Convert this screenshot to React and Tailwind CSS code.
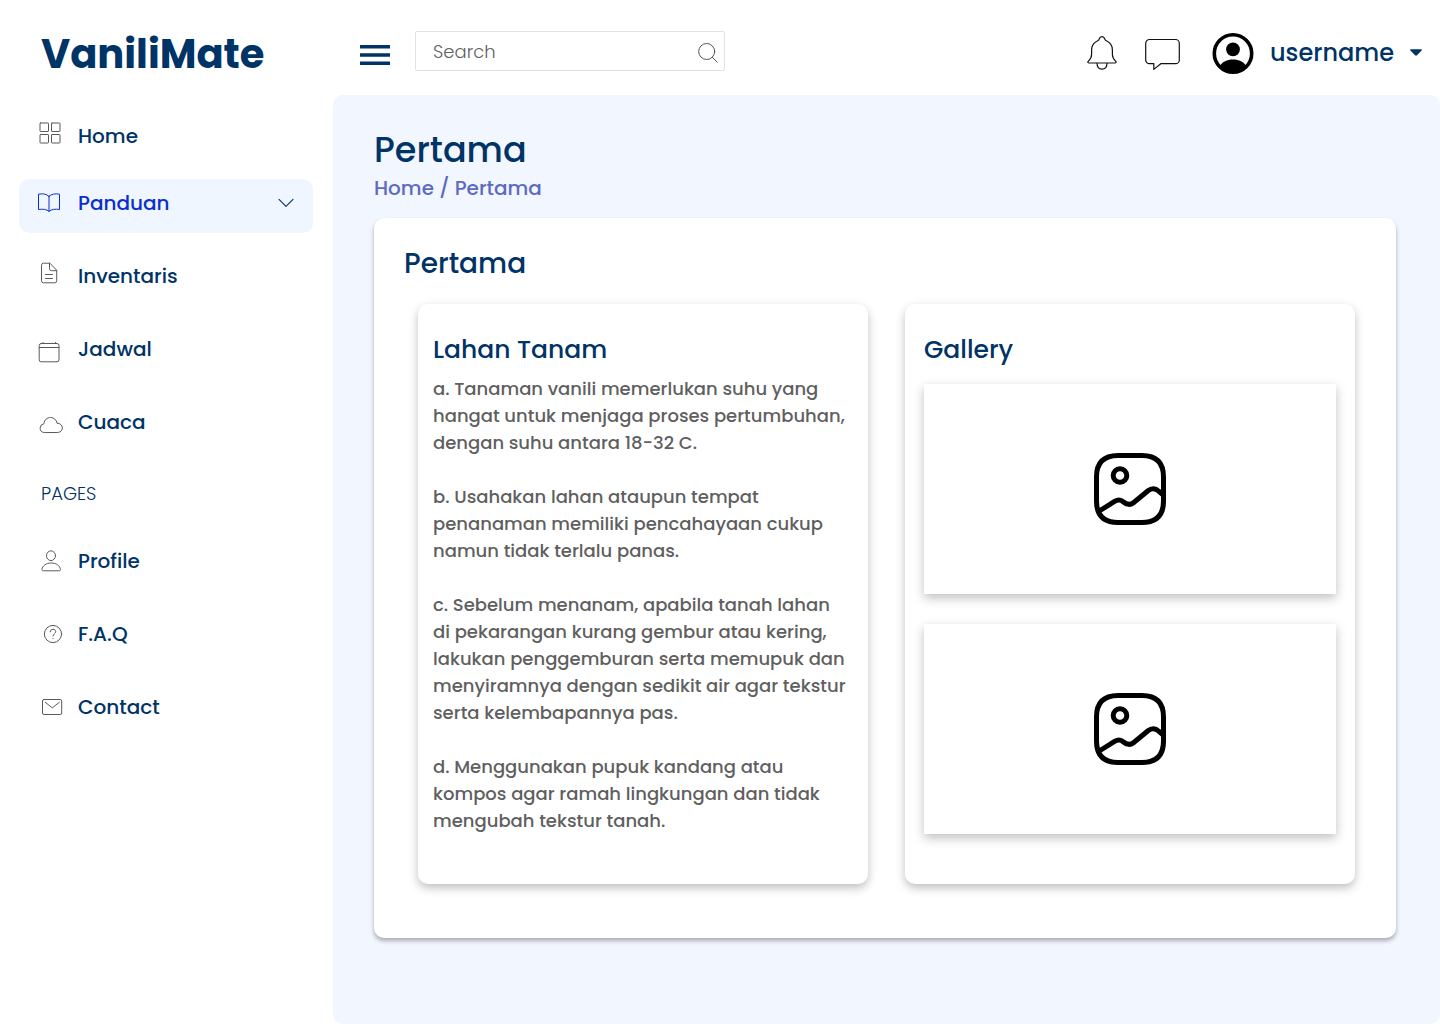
import React from "react";

const Icon = ({ children, className = "text-[#5a5a5a]" }) => (
  <svg
    viewBox="0 0 28 28"
    fill="none"
    stroke="currentColor"
    strokeWidth="1"
    strokeLinecap="round"
    strokeLinejoin="round"
    aria-hidden="true"
    className={`size-7 shrink-0 ${className}`}
  >
    {children}
  </svg>
);

const HomeIcon = () => (
  <Icon>
    <rect x="4" y="1" width="8.5" height="8.5" rx="0.5" />
    <rect x="15.5" y="1" width="8.5" height="8.5" rx="0.5" />
    <rect x="4" y="12.500" width="8.5" height="8.5" rx="0.5" />
    <rect x="15.5" y="12.500" width="8.5" height="8.5" rx="0.5" />
  </Icon>
);

const BookIcon = () => (
  <Icon className="text-[#0a2fd0]">
    <path d="M13 7.300C10.600 5 6.500 4.300 2.500 5.200V20.500C6.500 19.800 10.800 20.200 13 22.400C15.200 20.200 19.500 19.800 23.500 20.500V5.200C19.500 4.300 15.400 5 13 7.300ZM13 7.300V22.400" />
  </Icon>
);

const FileIcon = () => (
  <Icon>
    <path d="M13.500 1.200H7.500A2 2 0 0 0 5.500 3.200V18.800A2 2 0 0 0 7.500 20.800H18.700A2 2 0 0 0 20.700 18.800V8.700ZM13.500 1.200V6.700A2 2 0 0 0 15.500 8.700H20.700M9.500 12.500H16.500M9.500 16.500H16.500" />
  </Icon>
);

const CalendarIcon = () => (
  <Icon>
    <rect x="3.200" y="8.500" width="19.800" height="18.300" rx="2" />
    <path d="M3.200 12.500H23M7 7.500V8.500M19.500 7.500V8.500" />
  </Icon>
);

const CloudIcon = () => (
  <Icon>
    <path d="M7.800 24.500A4.400 4.400 0 0 1 7.900 15.800C8.300 11.800 11.200 9.500 14.500 9.500C17.800 9.500 20.600 11.900 21 15.200C24 15.200 26.400 17.200 26.400 19.900C26.400 22.500 24.300 24.500 21.600 24.500Z" />
  </Icon>
);

const PersonIcon = () => (
  <Icon>
    <ellipse cx="15" cy="8.700" rx="4.500" ry="4.900" />
    <path d="M7.200 23.800C6.300 23.800 5.800 23.300 5.900 22.500C6.500 18.600 10.200 16 15.200 16C20.200 16 23.900 18.600 24.500 22.500C24.600 23.300 24.100 23.800 23.200 23.800Z" />
  </Icon>
);

const HelpIcon = () => (
  <Icon>
    <circle cx="17" cy="14" r="8.600" />
    <path d="M14.300 11.800C14.300 10.100 15.400 9.300 17 9.300C18.600 9.300 19.700 10.200 19.700 11.600C19.700 13.800 17 13.700 17 16M17 18.400V18.600" />
  </Icon>
);

const MailIcon = () => (
  <Icon>
    <rect x="6.500" y="6.500" width="19.200" height="15" rx="1.500" />
    <path d="M9.300 9.300L16.300 14.900L23.300 9.300" />
  </Icon>
);

const ChevronIcon = () => (
  <svg
    viewBox="0 0 16 10"
    fill="none"
    stroke="#003366"
    strokeWidth="1.100"
    strokeLinecap="round"
    strokeLinejoin="round"
    aria-hidden="true"
    className="mr-0.5 ml-auto h-2.5 w-4"
  >
    <path d="M1 1.300L8 8.300L15 1.300" />
  </svg>
);

const GalleryIcon = () => (
  <svg
    viewBox="0 0 72 72"
    fill="none"
    stroke="#000"
    strokeWidth="5"
    strokeLinejoin="round"
    aria-hidden="true"
    className="size-18"
  >
    <path d="M24 2.500H48C62.500 2.500 69.500 9.500 69.500 24V48C69.500 62.500 62.500 69.500 48 69.500H24C9.500 69.500 2.500 62.500 2.500 48V24C2.500 9.500 9.500 2.500 24 2.500Z" />
    <circle cx="26" cy="22.500" r="6.800" />
    <path d="M4.500 58.500L21 48.200C24 46.400 27 46.800 29.500 49C33.500 52.400 37.500 52 41 48.500L54 37.800C57.500 35 61.500 35.300 64.500 38L69 41.800" />
  </svg>
);

const menu = [
  { label: "Home", icon: HomeIcon, gap: "" },
  { label: "Panduan", icon: BookIcon, gap: "mt-4", active: true },
  { label: "Inventaris", icon: FileIcon, gap: "mt-4" },
  { label: "Jadwal", icon: CalendarIcon, gap: "mt-[19px]" },
  { label: "Cuaca", icon: CloudIcon, gap: "mt-[19px]" },
];

const pages = [
  { label: "Profile", icon: PersonIcon, gap: "" },
  { label: "F.A.Q", icon: HelpIcon, gap: "mt-[19px]" },
  { label: "Contact", icon: MailIcon, gap: "mt-[19px]" },
];

const notes = [
  "a. Tanaman vanili memerlukan suhu yang hangat untuk menjaga proses pertumbuhan, dengan suhu antara 18-32 C.",
  "b. Usahakan lahan ataupun tempat penanaman memiliki pencahayaan cukup namun tidak terlalu panas.",
  "c. Sebelum menanam, apabila tanah lahan di pekarangan kurang gembur atau kering, lakukan penggemburan serta memupuk dan menyiramnya dengan sedikit air agar tekstur serta kelembapannya pas.",
  "d. Menggunakan pupuk kandang atau kompos agar ramah lingkungan dan tidak mengubah tekstur tanah.",
];

const NavList = ({ items }) => (
  <ul>
    {items.map(({ label, icon: ItemIcon, gap, active }) => (
      <li key={label} className={gap}>
        <a
          href="#"
          aria-current={active ? "page" : undefined}
          className={`flex h-[54px] items-center gap-3.5 rounded-[10px] px-[17px] text-xl font-medium ${
            active ? "bg-[#eff6ff] pb-1.5 text-[#0a2fd0]" : "text-[#003366]"
          }`}
        >
          <ItemIcon />
          <span>{label}</span>
          {active && <ChevronIcon />}
        </a>
      </li>
    ))}
  </ul>
);

const Sidebar = () => (
  <aside className="w-[333px] shrink-0 pr-5 pl-[19px]">
    <p className="pt-6 pl-[22px] text-[40px] leading-[60px] font-bold text-[#003366]">VaniliMate</p>
    <nav aria-label="Main" className="mt-[25px]">
      <NavList items={menu} />
      <h2 className="mt-[33px] mb-7 pl-[22px] text-lg leading-6 font-light text-[#003366]">PAGES</h2>
      <NavList items={pages} />
    </nav>
  </aside>
);

const Header = () => (
  <header className="flex h-[95px] items-center pt-3.5 pr-[18px] pl-[27px]">
    <button type="button" aria-label="Toggle menu">
      <svg viewBox="0 0 30 20" fill="#003366" aria-hidden="true" className="h-5 w-[30px]">
        <path d="M0 0H30V3.400H0ZM0 8.300H30V11.700H0ZM0 16.600H30V20H0Z" />
      </svg>
    </button>
    <form role="search" className="mb-2 ml-[25px] flex h-10 w-[310px] items-center rounded-xs border border-[#e2e2e2] pr-1.5 pl-[17px]">
      <input
        type="search"
        aria-label="Search"
        placeholder="Search"
        className="min-w-0 flex-1 pt-0.5 text-lg font-light text-[#5f5f5f] outline-none placeholder:text-[#5f5f5f]"
      />
      <button type="submit" aria-label="Submit search">
        <svg viewBox="0 0 20 20" fill="none" stroke="#555" strokeLinecap="round" aria-hidden="true" className="mt-1 size-5">
          <circle cx="8.700" cy="8.500" r="8" />
          <path d="M14.300 14.300L19.300 19.200" />
        </svg>
      </button>
    </form>
    <div className="mb-1 ml-auto flex items-center">
      <button type="button" aria-label="Notifications">
        <svg viewBox="0 0 30 34" fill="none" stroke="#111" strokeWidth="1.200" strokeLinejoin="round" aria-hidden="true" className="h-[34px] w-[30px]">
          <path d="M2 27C1 27 .5 26.200 1.200 25.400C3.500 23.200 4.600 21.500 4.600 18.500V14C4.600 10 7 6.400 10.700 4.800C11.600 4.400 11.900 3.900 12.200 3C12.700 1.500 13.700 .7 15 .7C16.300 .7 17.300 1.500 17.800 3C18.100 3.900 18.400 4.400 19.300 4.800C23 6.400 25.400 10 25.400 14V18.500C25.400 21.500 26.500 23.200 28.800 25.400C29.500 26.200 29 27 28 27Z" />
          <path d="M10 27C10 31 12 33.200 15 33.200C18 33.200 20 31 20 27" />
        </svg>
      </button>
      <button type="button" aria-label="Messages" className="ml-7">
        <svg viewBox="0 0 35 34" fill="none" stroke="#111" strokeWidth="1.200" strokeLinejoin="round" aria-hidden="true" className="h-[34px] w-[35px]">
          <path d="M4.500 3.500H30.500A3.800 3.800 0 0 1 34.300 7.300V23.900A3.800 3.800 0 0 1 30.500 27.700H15.800L8.800 33.400V27.700H4.500A3.800 3.800 0 0 1 .7 23.900V7.300A3.800 3.800 0 0 1 4.500 3.500Z" />
        </svg>
      </button>
      <button type="button" className="ml-8 flex items-center text-2xl leading-9 font-medium text-[#003366]">
        <svg viewBox="0 0 42 42" aria-hidden="true" className="mr-4 size-[42px]">
          <circle cx="21" cy="21.500" r="18.700" fill="none" stroke="#000" strokeWidth="3.600" />
          <circle cx="21" cy="17.300" r="6.900" />
          <path d="M7.500 34.500C10 30 15 27.500 21 27.500C27 27.500 32 30 34.500 34.500C31 38.500 26.500 40.500 21 40.500C15.500 40.500 11 38.500 7.500 34.500Z" />
        </svg>
        username
        <svg viewBox="0 0 12 7" fill="#003366" aria-hidden="true" className="ml-4 h-[7px] w-3">
          <path d="M1 .3H11C11.800 .3 12 .9 11.600 1.400L7 6.300C6.400 6.900 5.600 6.900 5 6.300L.4 1.400C0 .9 .2 .3 1 .3Z" />
        </svg>
      </button>
    </div>
  </header>
);

const GalleryItem = () => (
  <div
    role="img"
    aria-label="Image placeholder"
    className="flex h-[210px] items-center justify-center bg-white shadow-[0_4px_10px_rgba(0,0,0,0.25)]"
  >
    <GalleryIcon />
  </div>
);

export default function App() {
  return (
    <div className="flex min-h-screen bg-white font-['Poppins','Inter','Liberation_Sans',sans-serif]">
      <Sidebar />
      <div className="flex min-w-0 flex-1 flex-col">
        <Header />
        <main className="flex-1 rounded-[10px] bg-[#f1f6ff] pt-[31px] pr-11 pb-[86px] pl-[41px]">
          <h1 className="text-[35px] leading-12 font-medium text-[#003366]">Pertama</h1>
          <nav aria-label="Breadcrumb" className="text-xl leading-7 font-medium text-[#5c6bc0]">
            <a href="#">Home</a> / <a href="#">Pertama</a>
          </nav>
          <section className="mt-4 rounded-[10px] bg-white pt-[26px] pr-[41px] pb-[54px] pl-[30px] shadow-[0_3px_4px_rgba(0,0,0,0.3)]">
            <h2 className="text-[28px] leading-10 font-medium text-[#003366]">Pertama</h2>
            <div className="mt-5 ml-3.5 grid grid-cols-2 gap-[37px]">
              <article className="rounded-[10px] bg-white pt-7 pr-5 pb-12 pl-[15px] shadow-[0_4px_10px_rgba(0,0,0,0.25)]">
                <h3 className="text-[25px] leading-9 font-medium text-[#003366]">Lahan Tanam</h3>
                <div className="mt-[7px] space-y-[27px] text-lg leading-[27px] font-medium text-[#5f5f5f]">
                  {notes.map((note) => (
                    <p key={note}>{note}</p>
                  ))}
                </div>
              </article>
              <article className="rounded-[10px] bg-white px-[19px] pt-7 pb-[50px] shadow-[0_4px_10px_rgba(0,0,0,0.25)]">
                <h3 className="text-[25px] leading-9 font-medium text-[#003366]">Gallery</h3>
                <div className="mt-4 space-y-[30px]">
                  <GalleryItem />
                  <GalleryItem />
                </div>
              </article>
            </div>
          </section>
        </main>
      </div>
    </div>
  );
}
